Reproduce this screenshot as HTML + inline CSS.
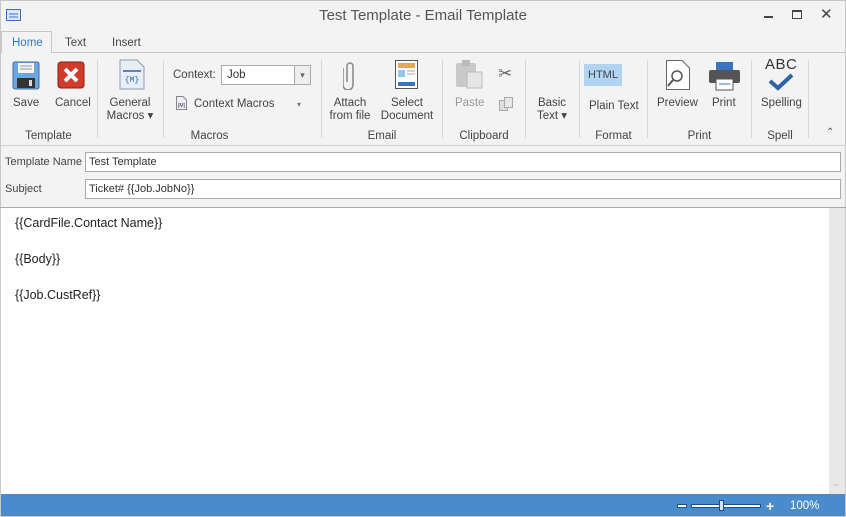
<!DOCTYPE html><html><head><style>
*{margin:0;padding:0;box-sizing:border-box}
body{width:846px;height:517px;overflow:hidden;background:#f3f3f3;font-family:"Liberation Sans",sans-serif;font-size:11.5px;color:#444;position:relative}
.a{position:absolute;white-space:nowrap}
.c{text-align:center}
.sep{position:absolute;width:1px;background:#d6d6d6;top:60px;height:78px}
.lbl{position:absolute;top:130px;font-size:11.5px;color:#444;text-align:center}
</style></head><body>
<div class="a" style="left:0;top:0;width:846px;height:517px;border:1px solid #c8c8c8"></div>
<svg class="a" style="left:6px;top:9px" width="15" height="12"><rect x="0.5" y="0.5" width="14" height="11" fill="#dbe8f7" stroke="#3a6fb5"/><line x1="3" y1="5" x2="12" y2="5" stroke="#3a6fb5"/><line x1="3" y1="8" x2="12" y2="8" stroke="#3a6fb5"/></svg>
<div class="a" style="left:0;width:846px;top:7px;text-align:center;font-size:15px;color:#555">Test Template - Email Template</div>
<div class="a" style="left:764px;top:16px;width:9px;height:2px;background:#444"></div>
<div class="a" style="left:792px;top:10px;width:10px;height:9px;border:1px solid #444;border-top-width:2px"></div>
<div class="a" style="left:820px;top:5px;font-size:15px;color:#444">✕</div>
<div class="a" style="left:0;top:52px;width:846px;height:1px;background:#c8c8c8"></div>
<div class="a" style="left:1px;top:31px;width:51px;height:22px;border:1px solid #c8c8c8;border-bottom:none;background:#f3f3f3"></div>
<div class="a" style="left:12px;top:37px;color:#2b79c7">Home</div>
<div class="a" style="left:65px;top:37px">Text</div>
<div class="a" style="left:112px;top:37px">Insert</div>
<svg class="a" style="left:12px;top:61px" width="28" height="29"><rect x="1" y="1" width="26" height="27" rx="2" fill="#6aa6e0" stroke="#3b6fa8"/><rect x="6" y="2" width="16" height="10" fill="#f4f4f4"/><line x1="8" y1="5" x2="20" y2="5" stroke="#999"/><line x1="8" y1="8" x2="20" y2="8" stroke="#999"/><rect x="5" y="17" width="18" height="10" fill="#333"/><rect x="17" y="19" width="3" height="6" fill="#ddd"/></svg>
<div class="a" style="left:13px;top:97px">Save</div>
<svg class="a" style="left:57px;top:61px" width="28" height="28"><rect x="1" y="1" width="26" height="26" rx="3" fill="#d23a2a" stroke="#8a1c12"/><path d="M8 8L20 20M20 8L8 20" stroke="#fff" stroke-width="4"/></svg>
<div class="a" style="left:55px;top:97px">Cancel</div>
<div class="sep" style="left:97px"></div>
<svg class="a" style="left:119px;top:59px" width="26" height="31"><path d="M1 1H18L25 8V30H1Z" fill="#e8eef6" stroke="#8b9bb5"/><rect x="4" y="11" width="18" height="2" fill="#5b84c4"/><text x="13" y="23" font-size="8" text-anchor="middle" fill="#2f63b3" font-family="Liberation Mono">{M}</text></svg>
<div class="a c" style="left:104px;top:97px;width:52px;line-height:13px">General<br>Macros ▾</div>
<div class="sep" style="left:163px"></div>
<div class="a" style="left:173px;top:69px">Context:</div>
<div class="a" style="left:221px;top:65px;width:90px;height:20px;border:1px solid #aaa;background:#fff"><span style="position:absolute;left:5px;top:3px;color:#333">Job</span><div style="position:absolute;right:0;top:0;width:16px;height:18px;border-left:1px solid #aaa;background:#eee;color:#666;font-size:9px;text-align:center;line-height:18px">▾</div></div>
<svg class="a" style="left:176px;top:96px" width="11" height="14"><path d="M0.5 0.5H7L10.5 4V13.5H0.5Z" fill="#eef" stroke="#888"/><text x="5.5" y="11" font-size="5" text-anchor="middle" fill="#333">[M]</text></svg>
<div class="a" style="left:194px;top:98px">Context Macros</div>
<div class="a" style="left:297px;top:100px;font-size:8px;color:#777">▾</div>
<div class="sep" style="left:321px"></div>
<svg class="a" style="left:343px;top:60px" width="14" height="30"><path d="M4 22V6a3 3 0 0 1 6 0V25a5 5 0 0 1-10 0V8" fill="none" stroke="#888" stroke-width="1.5"/></svg>
<div class="a c" style="left:326px;top:97px;width:48px;line-height:13px">Attach<br>from file</div>
<svg class="a" style="left:395px;top:60px" width="23" height="29"><rect x="0.5" y="0.5" width="22" height="28" fill="#fff" stroke="#555"/><rect x="3" y="3" width="17" height="5" fill="#e8a94e"/><rect x="3" y="10" width="7" height="7" fill="#8ec9ea"/><line x1="12" y1="11" x2="20" y2="11" stroke="#aaa"/><line x1="12" y1="14" x2="20" y2="14" stroke="#aaa"/><rect x="3" y="22" width="17" height="4" fill="#3a73c0"/></svg>
<div class="a c" style="left:380px;top:97px;width:54px;line-height:13px">Select<br>Document</div>
<div class="lbl" style="left:322px;width:120px">Email</div>
<div class="sep" style="left:442px"></div>
<svg class="a" style="left:455px;top:59px" width="30" height="31"><rect x="1" y="4" width="20" height="24" rx="2" fill="#c9c9c9"/><rect x="7" y="1" width="8" height="6" fill="#bbb"/><rect x="12" y="13" width="15" height="16" fill="#e6e6e6" stroke="#bbb"/></svg>
<div class="a" style="left:455px;top:97px;color:#999">Paste</div>
<div class="a" style="left:498px;top:64px;font-size:17px;color:#666">✂</div>
<svg class="a" style="left:499px;top:97px" width="14" height="14"><rect x="0.5" y="3.5" width="8" height="10" fill="#ddd" stroke="#aaa"/><rect x="5.5" y="0.5" width="8" height="10" fill="#e8e8e8" stroke="#aaa"/></svg>
<div class="lbl" style="left:443px;width:82px">Clipboard</div>
<div class="sep" style="left:525px"></div>
<div class="a c" style="left:527px;top:97px;width:50px;line-height:13px">Basic<br>Text ▾</div>
<div class="sep" style="left:579px"></div>
<div class="a" style="left:584px;top:64px;width:38px;height:22px;background:#b0d4f1;color:#444;font-size:11px;line-height:22px;text-align:center">HTML</div>
<div class="a" style="left:589px;top:100px">Plain Text</div>
<div class="lbl" style="left:580px;width:67px">Format</div>
<div class="sep" style="left:647px"></div>
<svg class="a" style="left:666px;top:60px" width="24" height="30"><path d="M0.5 0.5H16L23.5 8V29.5H0.5Z" fill="#fff" stroke="#666"/><circle cx="11" cy="16" r="5" fill="none" stroke="#555" stroke-width="1.5"/><line x1="7" y1="20" x2="2" y2="26" stroke="#555" stroke-width="2"/></svg>
<div class="a" style="left:657px;top:97px">Preview</div>
<svg class="a" style="left:708px;top:61px" width="33" height="30"><rect x="8" y="1" width="17" height="9" fill="#3a73c0"/><rect x="1" y="9" width="31" height="13" rx="2" fill="#555"/><rect x="8" y="18" width="17" height="11" fill="#fff" stroke="#555"/><line x1="11" y1="23" x2="22" y2="23" stroke="#3a73c0"/></svg>
<div class="a" style="left:712px;top:97px">Print</div>
<div class="lbl" style="left:648px;width:103px">Print</div>
<div class="sep" style="left:751px"></div>
<div class="a" style="left:765px;top:56px;font-size:15px;color:#333;letter-spacing:0.5px">ABC</div>
<svg class="a" style="left:768px;top:73px" width="26" height="18"><path d="M2 8L10 15L24 2" fill="none" stroke="#2f63a8" stroke-width="4"/></svg>
<div class="a" style="left:761px;top:97px">Spelling</div>
<div class="lbl" style="left:752px;width:56px">Spell</div>
<div class="sep" style="left:808px"></div>
<div class="a" style="left:826px;top:127px;font-size:10px;color:#555">⌃</div>
<div class="lbl" style="left:0;width:97px">Template</div>
<div class="lbl" style="left:98px;width:223px">Macros</div>
<div class="a" style="left:0;top:145px;width:846px;height:1px;background:#cfcfcf"></div>
<div class="a" style="left:5px;top:156px;font-size:11px">Template Name</div>
<div class="a" style="left:85px;top:152px;width:756px;height:20px;border:1px solid #aaa;background:#fff;padding:3px 3px;color:#333;font-size:11px">Test Template</div>
<div class="a" style="left:5px;top:183px;font-size:11px">Subject</div>
<div class="a" style="left:85px;top:179px;width:756px;height:20px;border:1px solid #aaa;background:#fff;padding:3px 3px;color:#333;font-size:11px">Ticket# {{Job.JobNo}}</div>
<div class="a" style="left:0;top:207px;width:846px;height:1px;background:#aaa"></div>
<div class="a" style="left:1px;top:208px;width:828px;height:286px;background:#fff"></div>
<div class="a" style="left:829px;top:208px;width:16px;height:286px;background:#e8e8e8"></div>
<div class="a" style="left:832px;top:478px;font-size:9px;color:#bbb">⌄</div>
<div class="a" style="left:15px;top:216px;color:#222;font-size:12.5px">{{CardFile.Contact Name}}</div>
<div class="a" style="left:15px;top:252px;color:#222;font-size:12.5px">{{Body}}</div>
<div class="a" style="left:15px;top:288px;color:#222;font-size:12.5px">{{Job.CustRef}}</div>
<div class="a" style="left:1px;top:494px;width:844px;height:22px;background:#4a8bcb"></div>
<div class="a" style="left:678px;top:505px;width:8px;height:2px;background:#fff;outline:1px solid #1d4f8a"></div>
<div class="a" style="left:692px;top:505px;width:68px;height:2px;background:#fff;outline:1px solid #1d4f8a"></div>
<div class="a" style="left:719px;top:500px;width:5px;height:11px;background:#cfe2f5;border:1px solid #1d4f8a"></div>
<div class="a" style="left:766px;top:498px;font-size:14px;color:#fff;font-weight:bold">+</div>
<div class="a" style="left:790px;top:500px;color:#fff;font-size:11.5px">100%</div>
</body></html>
